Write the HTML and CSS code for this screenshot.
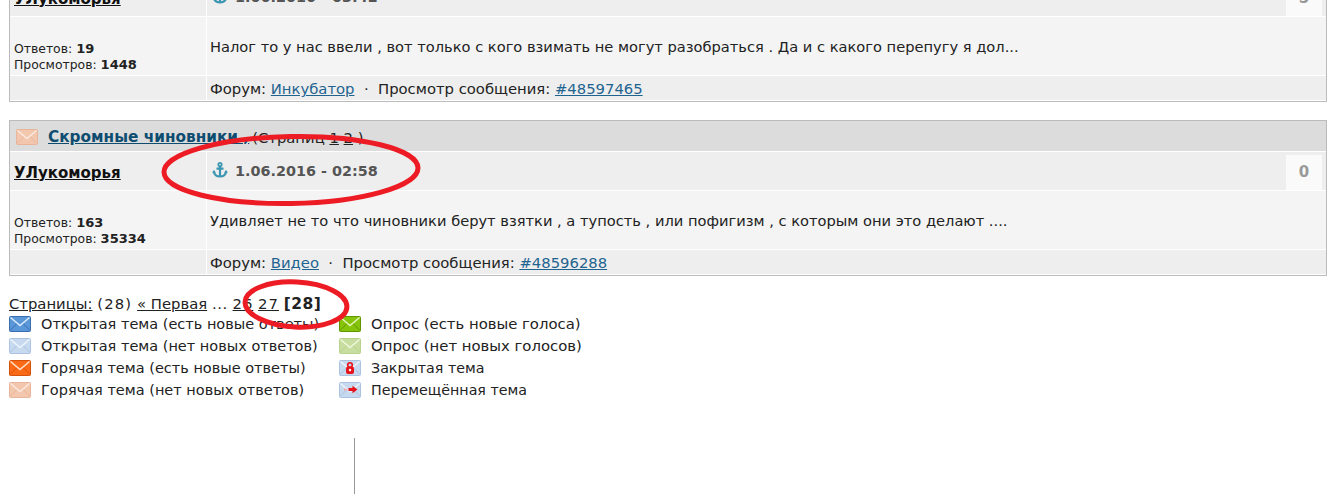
FILE: index.html
```html
<!DOCTYPE html>
<html lang="ru">
<head>
    <meta charset="UTF-8">
    <title>Сообщения пользователя</title>
    <link rel="stylesheet" href="styles.css">
</head>
<body>
    <svg class="defs" width="0" height="0">
        <symbol id="env" viewBox="0 0 22 16">
            <rect class="env-body" x="0.5" y="0.5" width="21" height="15" rx="1"/>
            <path class="env-fold" d="M1 14.5 8.5 7M21 14.5 13.5 7"/>
            <path class="env-flap" d="M1.5 1.5 11 9.5 20.5 1.5"/>
        </symbol>
        <symbol id="anchor" viewBox="0 0 16 16">
            <circle cx="8" cy="2.6" r="1.7" fill="none" stroke="currentColor" stroke-width="1.8"/>
            <path d="M8 4.3V14.5M4.5 6.6H11.500M1.9 9.600C2.300 12.700 5 14.400 8 14.500 11 14.400 13.700 12.700 14.100 9.600" fill="none" stroke="currentColor" stroke-width="2.200"/>
            <path d="M0.2 10.800 2 7.800 3.800 10.800ZM12.200 10.800 14 7.800 15.800 10.800Z" fill="currentColor"/>
        </symbol>
    </svg>

    <div class="page">
        <div class="post">
            <div class="post-title">
                <svg class="env env-hot-old"><use href="#env"/></svg>
                <a href="#" class="title-link">Налоги</a>
            </div>
            <div class="post-row row-head">
                <div class="cell cell-user"><a href="#" class="user">УЛукоморья</a></div>
                <div class="cell cell-date">
                    <svg class="anchor"><use href="#anchor"/></svg>
                    <span class="date">1.06.2016 - 03:42</span>
                    <span class="score">5</span>
                </div>
            </div>
            <div class="post-row row-body">
                <div class="cell cell-stats">
                    <div>Ответов: <b>19</b></div>
                    <div>Просмотров: <b>1448</b></div>
                </div>
                <div class="cell cell-text">Налог то у нас ввели , вот только с кого взимать не могут разобраться . Да и с какого перепугу я дол...</div>
            </div>
            <div class="post-row row-foot">
                <div class="cell"></div>
                <div class="cell cell-foot">Форум: <a href="#">Инкубатор</a> &nbsp;·&nbsp; Просмотр сообщения: <a href="#">#48597465</a></div>
            </div>
        </div>

        <div class="post">
            <div class="post-title">
                <svg class="env env-hot-old"><use href="#env"/></svg>
                <a href="#" class="title-link">Скромные чиновники ,</a>
                <span class="title-pages">(Страниц <a href="#">1</a> <a href="#">2</a> )</span>
            </div>
            <div class="post-row row-head">
                <div class="cell cell-user"><a href="#" class="user">УЛукоморья</a></div>
                <div class="cell cell-date">
                    <svg class="anchor"><use href="#anchor"/></svg>
                    <span class="date">1.06.2016 - 02:58</span>
                    <span class="score">0</span>
                </div>
            </div>
            <div class="post-row row-body">
                <div class="cell cell-stats">
                    <div>Ответов: <b>163</b></div>
                    <div>Просмотров: <b>35334</b></div>
                </div>
                <div class="cell cell-text">Удивляет не то что чиновники берут взятки , а тупость , или пофигизм , с которым они это делают ....</div>
            </div>
            <div class="post-row row-foot">
                <div class="cell"></div>
                <div class="cell cell-foot">Форум: <a href="#">Видео</a> &nbsp;·&nbsp; Просмотр сообщения: <a href="#">#48596288</a></div>
            </div>
        </div>

        <div class="pages">
            <a href="#">Страницы:</a> <span class="pages-count">(28)</span> <a href="#">« Первая</a> <span class="pages-gap">...</span> <a href="#" class="pages-num">26</a> <a href="#" class="pages-num">27</a> <b>[28]</b>
        </div>

        <div class="legend">
            <div class="legend-item"><svg class="env env-new"><use href="#env"/></svg>Открытая тема (есть новые ответы)</div>
            <div class="legend-item legend-wide"><svg class="env env-poll"><use href="#env"/></svg>Опрос (есть новые голоса)</div>
            <div class="legend-item"><svg class="env env-old"><use href="#env"/></svg>Открытая тема (нет новых ответов)</div>
            <div class="legend-item legend-wide"><svg class="env env-poll-old"><use href="#env"/></svg>Опрос (нет новых голосов)</div>
            <div class="legend-item"><svg class="env env-hot"><use href="#env"/></svg>Горячая тема (есть новые ответы)</div>
            <div class="legend-item legend-tight">
                <svg class="env env-old" viewBox="0 0 22 16">
                    <use href="#env"/>
                    <rect x="7" y="6.500" width="8" height="7.500" rx="2" fill="#e8141c"/>
                    <circle cx="11" cy="5" r="2.300" fill="none" stroke="#e8141c" stroke-width="1.600"/>
                    <circle cx="11" cy="10" r="1.200" fill="#fff"/>
                </svg>Закрытая тема
            </div>
            <div class="legend-item"><svg class="env env-hot-old"><use href="#env"/></svg>Горячая тема (нет новых ответов)</div>
            <div class="legend-item legend-tight">
                <svg class="env env-old" viewBox="0 0 22 16">
                    <use href="#env"/>
                    <path d="M5 7.500h1.500M7.500 7.500h1" stroke="#f6a0a0" stroke-width="2" fill="none"/>
                    <path d="M9.500 6h4V3.800L18.500 7.500 13.500 11.200V9h-4Z" fill="#e8141c"/>
                </svg>Перемещённая тема
            </div>
        </div>

        <div class="divider"></div>
    </div>

    <!-- red marks drawn over the screenshot -->
    <svg class="marks" width="1331" height="494">
        <ellipse cx="291" cy="170" rx="127" ry="33.500" transform="rotate(-1 291 170)"/>
        <ellipse cx="296" cy="304.500" rx="51" ry="22.500" transform="rotate(3 296 304)"/>
    </svg>
</body>
</html>
```

FILE: styles.css
```css
html, body {
    margin: 0;
    padding: 0;
    height: 494px;
    overflow: hidden;
    background: #fff;
}
body {
    font-family: "DejaVu Sans", Verdana, sans-serif;
    font-size: 14.800px;
    color: #222;
    position: relative;
}
a {
    color: #1f6490;
}
.defs {
    position: absolute;
}

.page {
    margin-top: -54px;
    padding: 0 4px 0 9px;
}

.post {
    border: 1px solid #bbb;
    margin-bottom: 18px;
    background: #fff;
}
.post-title {
    box-sizing: border-box;
    height: 30px;
    background: #dcdcdc;
    display: flex;
    align-items: center;
    gap: 10px;
    padding: 1px 0 0 6px;
    margin-bottom: 1px;
}
.title-link {
    font-weight: bold;
    color: #0e4c70;
    font-size: 15.300px;
    padding-top: 1px;
}
.title-pages {
    margin-left: -7px;
    padding-top: 1px;
}
.title-pages a {
    color: #222;
}
.post-row {
    display: grid;
    grid-template-columns: 196px 1fr;
    column-gap: 1px;
    margin-bottom: 1px;
}
.row-foot {
    margin-bottom: 0;
    padding-bottom: 1px;
}
.cell {
    box-sizing: border-box;
    display: flex;
    align-items: center;
    padding-left: 4px;
}
.row-head .cell {
    height: 38px;
    background: #eee;
}
.row-body .cell {
    height: 58px;
    background: #f4f4f4;
}
.row-foot .cell {
    height: 24px;
    background: #eee;
}
.cell-user {
    padding-top: 3px;
}
.user {
    font-weight: bold;
    color: #111;
    font-size: 15px;
}
.cell-date {
    position: relative;
    padding-left: 5px;
}
.anchor {
    width: 16px;
    height: 16px;
    color: #3a96b0;
    margin-right: 7px;
    margin-top: -3px;
}
.date {
    font-weight: bold;
    color: #555;
    font-size: 14.400px;
}
.score {
    margin-left: auto;
    margin-right: 4px;
    align-self: flex-end;
    width: 36px;
    height: 35px;
    padding-bottom: 2px;
    box-sizing: border-box;
    background: #fafafa;
    color: #999;
    font-weight: bold;
    font-size: 15px;
    display: flex;
    align-items: center;
    justify-content: center;
}
.row-body .cell-stats {
    display: block;
    font-size: 12.400px;
    line-height: 16px;
    padding-top: 24px;
}
.cell-stats b {
    font-size: 13px;
}
.cell-foot {
    display: block;
    line-height: 26px;
}
.row-foot .cell-foot {
    padding-left: 3px;
}
.row-body .cell-text {
    padding: 1px 0 0 3px;
    font-size: 14.650px;
}

.pages {
    line-height: 20px;
    margin-top: 18px;
    color: #222;
}
.pages a {
    color: #222;
}
.pages b {
    font-size: 15.500px;
    letter-spacing: 0.500px;
}
.pages-count {
    letter-spacing: 1.200px;
}
.pages-gap {
    letter-spacing: 0.600px;
}
.pages .pages-num {
    letter-spacing: 1px;
}

.legend {
    display: grid;
    grid-template-columns: 330px auto;
    justify-content: start;
    grid-auto-rows: 22px;
    margin-top: -1px;
    font-size: 14.500px;
}
.legend-item {
    display: flex;
    align-items: center;
    white-space: nowrap;
}
.legend-wide {
    font-size: 14.850px;
}
.legend-tight {
    font-size: 14.250px;
}
.env {
    width: 22px;
    height: 16px;
    flex: none;
}
.legend-item .env {
    margin-right: 10px;
}
.env-body {
    fill: var(--env-fill);
    stroke: var(--env-edge);
}
.env-fold {
    fill: none;
    stroke: var(--env-edge);
    stroke-width: 1;
}
.env-flap {
    fill: none;
    stroke: var(--env-flap);
    stroke-width: 1.500;
}
.env-new {
    --env-fill: #5a97d8;
    --env-edge: #3a6fae;
    --env-flap: #dcebfa;
}
.env-old {
    --env-fill: #c6d9ef;
    --env-edge: #abc3e0;
    --env-flap: #eef4fb;
}
.env-hot {
    --env-fill: #fb6a16;
    --env-edge: #d5520c;
    --env-flap: #ffe3cf;
}
.env-hot-old {
    --env-fill: #f3c6ae;
    --env-edge: #e8b49a;
    --env-flap: #fbeadf;
}
.env-poll {
    --env-fill: #86c40c;
    --env-edge: #5f9600;
    --env-flap: #e4f5b8;
}
.env-poll-old {
    --env-fill: #c8dea0;
    --env-edge: #b9d28c;
    --env-flap: #eef6dc;
}

.divider {
    width: 1px;
    height: 60px;
    background: #999;
    margin: 37px 0 0 345px;
}

.marks {
    position: absolute;
    left: 0;
    top: 0;
    pointer-events: none;
}
.marks ellipse {
    fill: none;
    stroke: #ed1c24;
    stroke-width: 5;
}
```
